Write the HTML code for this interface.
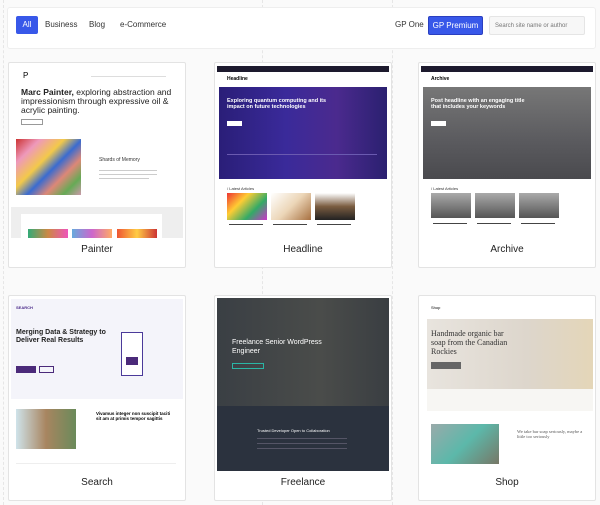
<!DOCTYPE html>
<html><head><meta charset="utf-8"><style>
*{box-sizing:border-box;margin:0;padding:0}
body{width:600px;height:505px;background:#fafafa;font-family:"Liberation Sans",sans-serif;position:relative;overflow:hidden}
.vl{position:absolute;top:0;bottom:0;border-left:1px dashed #e6e6e6}
.bar{position:absolute;left:7px;top:7px;width:589px;height:42px;background:#fff;border:1px solid #eee;border-radius:3px}
.btn{position:absolute;font-size:8px;color:#333;top:20px}
.card{position:absolute;width:178px;height:206px;background:#fff;border:1px solid #e3e3e3;border-radius:2px;overflow:hidden}
.img{position:absolute;left:2px;top:3px;width:172px;height:172px;overflow:hidden}
.lbl{position:absolute;left:0;right:0;bottom:12px;text-align:center;font-size:10px;color:#222}
.a{position:absolute}
.t{position:absolute;background:#ccc;height:1px}
</style></head><body>
<div class="vl" style="left:262px"></div><div class="vl" style="left:392px"></div><div class="vl" style="left:3px"></div>
<div class="bar"></div>
<div class="a" style="left:16px;top:16px;width:22px;height:18px;background:#3858e9;border-radius:2px;color:#fff;font-size:8px;text-align:center;line-height:18px">All</div>
<div class="btn" style="left:45px">Business</div>
<div class="btn" style="left:89px">Blog</div>
<div class="btn" style="left:120px">e-Commerce</div>
<div class="btn" style="left:395px">GP One</div>
<div class="a" style="left:428px;top:16px;width:55px;height:19px;background:#3858e9;border:1px solid #2a3fc0;border-radius:2px;color:#fff;font-size:8px;text-align:center;line-height:17px">GP Premium</div>
<div class="a" style="left:489px;top:16px;width:96px;height:19px;background:#f7f7f7;border:1px solid #e5e5e5;border-radius:2px;font-size:6px;color:#777;padding:6px 5px">Search site name or author</div>

<!-- Painter -->
<div class="card" style="left:8px;top:62px">
<div class="img" style="background:#fff">
<div class="a" style="left:12px;top:5px;font-size:8px">P</div>
<div class="t" style="left:80px;top:10px;width:75px;background:#ddd"></div>
<div class="a" style="left:10px;top:22px;width:158px;font-size:8.5px;line-height:9px;color:#222"><b>Marc Painter,</b> exploring abstraction and impressionism through expressive oil &amp; acrylic painting.</div>
<div class="a" style="left:10px;top:53px;width:22px;height:6px;border:1px solid #999"></div>
<div class="a" style="left:5px;top:73px;width:65px;height:56px;background:linear-gradient(135deg,#c33 0%,#e9b 20%,#f3c94a 40%,#3a6bd0 55%,#d87 70%,#6a5 85%,#c9a 100%)"></div>
<div class="a" style="left:88px;top:91px;font-size:5px;color:#333">Shards of Memory</div>
<div class="t" style="left:88px;top:104px;width:58px"></div><div class="t" style="left:88px;top:108px;width:58px"></div><div class="t" style="left:88px;top:112px;width:50px"></div>
<div class="a" style="left:0;top:141px;width:172px;height:34px;background:#eee"></div>
<div class="a" style="left:10px;top:148px;width:141px;height:28px;background:#fff"></div>
<div class="a" style="left:17px;top:163px;width:40px;height:12px;background:linear-gradient(90deg,#3a7,#c84,#e5b)"></div>
<div class="a" style="left:61px;top:163px;width:40px;height:12px;background:linear-gradient(90deg,#6ad,#c6c,#fa6)"></div>
<div class="a" style="left:106px;top:163px;width:40px;height:12px;background:linear-gradient(90deg,#e53,#fc4,#c33)"></div>
</div><div class="lbl">Painter</div></div>

<!-- Headline -->
<div class="card" style="left:214px;top:62px">
<div class="img" style="background:#fff">
<div class="a" style="left:0;top:0;width:172px;height:6px;background:#1d1a2e"></div>
<div class="a" style="left:10px;top:10px;font-size:5px;font-weight:bold">Headline</div>
<div class="a" style="left:2px;top:21px;width:168px;height:92px;background:linear-gradient(90deg,#2a1e78,#3a2a9a 40%,#4b2a8e 70%,#2a2070)"></div>
<div class="a" style="left:10px;top:32px;width:100px;font-size:5.5px;line-height:6px;color:#fff;font-weight:bold">Exploring quantum computing and its impact on future technologies</div>
<div class="a" style="left:10px;top:55px;width:15px;height:5px;background:#fff"></div>
<div class="a" style="left:10px;top:88px;width:150px;height:1px;background:#6a5ab0"></div>
<div class="a" style="left:10px;top:120px;font-size:4px;color:#333">/ Latest Articles</div>
<div class="a" style="left:10px;top:127px;width:40px;height:27px;background:linear-gradient(135deg,#e33,#fc3,#3a6,#c3c)"></div>
<div class="a" style="left:54px;top:127px;width:40px;height:27px;background:linear-gradient(135deg,#fff,#ecd6b8,#a87040)"></div>
<div class="a" style="left:98px;top:127px;width:40px;height:27px;background:linear-gradient(180deg,#fff,#7a5c40,#222)"></div>
<div class="t" style="left:12px;top:158px;width:34px;background:#444"></div><div class="t" style="left:56px;top:158px;width:34px;background:#444"></div><div class="t" style="left:100px;top:158px;width:34px;background:#444"></div>
</div><div class="lbl">Headline</div></div>

<!-- Archive -->
<div class="card" style="left:418px;top:62px">
<div class="img" style="background:#fff">
<div class="a" style="left:0;top:0;width:172px;height:6px;background:#1d1a2e"></div>
<div class="a" style="left:10px;top:10px;font-size:5px;font-weight:bold">Archive</div>
<div class="a" style="left:2px;top:21px;width:168px;height:92px;background:linear-gradient(180deg,#777,#5a5a5e 60%,#4a4a4e)"></div>
<div class="a" style="left:10px;top:32px;width:100px;font-size:5.5px;line-height:6px;color:#fff;font-weight:bold">Post headline with an engaging title that includes your keywords</div>
<div class="a" style="left:10px;top:55px;width:15px;height:5px;background:#fff"></div>
<div class="a" style="left:10px;top:120px;font-size:4px;color:#333">/ Latest Articles</div>
<div class="a" style="left:10px;top:127px;width:40px;height:25px;background:linear-gradient(180deg,#aaa,#555)"></div>
<div class="a" style="left:54px;top:127px;width:40px;height:25px;background:linear-gradient(180deg,#aaa,#555)"></div>
<div class="a" style="left:98px;top:127px;width:40px;height:25px;background:linear-gradient(180deg,#aaa,#555)"></div>
<div class="t" style="left:12px;top:157px;width:34px;background:#444"></div><div class="t" style="left:56px;top:157px;width:34px;background:#444"></div><div class="t" style="left:100px;top:157px;width:34px;background:#444"></div>
</div><div class="lbl">Archive</div></div>

<!-- Search -->
<div class="card" style="left:8px;top:295px">
<div class="img" style="background:#fff">
<div class="a" style="left:0;top:0;width:172px;height:100px;background:#f4f4fa"></div>
<div class="a" style="left:5px;top:6px;font-size:4px;color:#4b2a8a;font-weight:bold">SEARCH</div>
<div class="a" style="left:5px;top:30px;width:90px;font-size:7px;line-height:8px;font-weight:bold;color:#222">Merging Data &amp; Strategy to Deliver Real Results</div>
<div class="a" style="left:5px;top:67px;width:20px;height:7px;background:#4b2a7a"></div>
<div class="a" style="left:28px;top:67px;width:15px;height:7px;border:1px solid #4b2a7a"></div>
<div class="a" style="left:110px;top:33px;width:22px;height:44px;border:1px solid #4b3a9a;background:#fff"></div>
<div class="a" style="left:115px;top:58px;width:12px;height:8px;background:#4b2a7a"></div>
<div class="a" style="left:5px;top:110px;width:60px;height:40px;background:linear-gradient(90deg,#cfe3ea,#a88560,#6a8a5a)"></div>
<div class="a" style="left:85px;top:112px;width:80px;font-size:4.5px;font-weight:bold;line-height:5px">Vivamus integer non suscipit taciti sit am at primis tempor sagittis</div>
<div class="a" style="left:5px;top:164px;width:160px;height:4px;border-top:1px solid #eee"></div>
</div><div class="lbl">Search</div></div>

<!-- Freelance -->
<div class="card" style="left:214px;top:295px">
<div class="img" style="background:#2b323e;top:2px;height:173px">
<div class="a" style="left:0;top:0;width:172px;height:108px;background:linear-gradient(90deg,#3a3f44,#4a4c4a 60%,#3a3e42)"></div>
<div class="a" style="left:15px;top:40px;width:90px;font-size:7px;line-height:9px;color:#fff">Freelance Senior WordPress Engineer</div>
<div class="a" style="left:15px;top:65px;width:32px;height:6px;border:1px solid #2bb5a5"></div>
<div class="a" style="left:40px;top:130px;font-size:4px;color:#fff">Trusted Developer Open to Collaboration</div>
<div class="t" style="left:40px;top:140px;width:90px;background:#556"></div><div class="t" style="left:40px;top:145px;width:90px;background:#556"></div><div class="t" style="left:40px;top:150px;width:90px;background:#556"></div>
</div><div class="lbl">Freelance</div></div>

<!-- Shop -->
<div class="card" style="left:418px;top:295px">
<div class="img" style="background:#fff">
<div class="a" style="left:10px;top:6px;font-size:4px">Shop</div>
<div class="a" style="left:6px;top:20px;width:166px;height:70px;background:linear-gradient(90deg,#e8e4de,#ddd6cc 60%,#e4d6b8)"></div>
<div class="a" style="left:10px;top:30px;width:80px;font-family:'Liberation Serif',serif;font-size:8px;line-height:9px;color:#333">Handmade organic bar soap from the Canadian Rockies</div>
<div class="a" style="left:10px;top:63px;width:30px;height:7px;background:#666"></div>
<div class="a" style="left:6px;top:90px;width:166px;height:22px;background:#f7f6f3"></div>
<div class="a" style="left:10px;top:125px;width:68px;height:40px;background:linear-gradient(135deg,#9aa,#5cb8aa,#776)"></div>
<div class="a" style="left:96px;top:130px;width:70px;font-family:'Liberation Serif',serif;font-size:4.5px;color:#555">We take bar soap seriously, maybe a little too seriously</div>
</div><div class="lbl">Shop</div></div>
</body></html>
